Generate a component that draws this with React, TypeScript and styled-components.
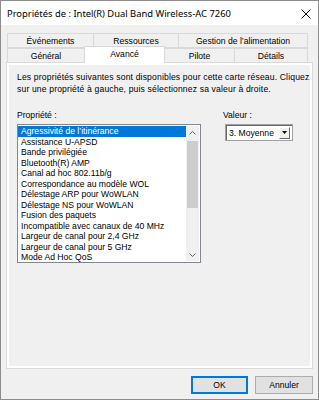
import React, { useState } from "react";
import styled, { createGlobalStyle } from "styled-components";

const GlobalStyle = createGlobalStyle`
  html, body {
    margin: 0;
    padding: 0;
    background: #ffffff;
  }
  * {
    box-sizing: border-box;
  }
`;

const properties = [
  "Agressivité de l’itinérance",
  "Assistance U-APSD",
  "Bande privilégiée",
  "Bluetooth(R) AMP",
  "Canal ad hoc 802.11b/g",
  "Correspondance au modèle WOL",
  "Délestage ARP pour WoWLAN",
  "Délestage NS pour WoWLAN",
  "Fusion des paquets",
  "Incompatible avec canaux de 40 MHz",
  "Largeur de canal pour 2,4 GHz",
  "Largeur de canal pour 5 GHz",
  "Mode Ad Hoc QoS",
];

const backTabs = [
  { label: "Événements", width: 87 },
  { label: "Ressources", width: 86 },
  { label: "Gestion de l’alimentation", width: 130 },
];

const frontTabs = [
  { label: "Général", width: 78 },
  { label: "Avancé", width: 81 },
  { label: "Pilote", width: 71 },
  { label: "Détails", width: 74 },
];

export default function App() {
  const [tab, setTab] = useState("Avancé");
  const [selected, setSelected] = useState(0);

  return (
    <>
      <GlobalStyle />
      <Window>
        <TitleBar>
          <Title>Propriétés de : Intel(R) Dual Band Wireless-AC 7260</Title>
          <CloseButton>
            <svg width="10" height="10" viewBox="0 0 10 10">
              <path d="M0.5 0.5 L9.5 9.5 M9.5 0.5 L0.5 9.5" stroke="#111" strokeWidth="1" />
            </svg>
          </CloseButton>
        </TitleBar>
        <Body>
          <TabRow>
            {backTabs.map((t) => (
              <Tab key={t.label} $width={t.width} onClick={() => setTab(t.label)}>
                {t.label}
              </Tab>
            ))}
          </TabRow>
          <TabRow>
            {frontTabs.map((t) => (
              <Tab
                key={t.label}
                $width={t.width}
                $active={tab === t.label}
                onClick={() => setTab(t.label)}
              >
                {t.label}
              </Tab>
            ))}
          </TabRow>
          <Panel>
            <Description>
              Les propriétés suivantes sont disponibles pour cette carte réseau. Cliquez
              <br />
              sur une propriété à gauche, puis sélectionnez sa valeur à droite.
            </Description>
            <Columns>
              <LeftColumn>
                <Label>Propriété :</Label>
                <ListBox>
                  <Items>
                    {properties.map((p, i) => (
                      <Item key={p} $selected={selected === i} onClick={() => setSelected(i)}>
                        {p}
                      </Item>
                    ))}
                  </Items>
                  <ScrollBar>
                    <ScrollArrow>
                      <svg width="7" height="4" viewBox="0 0 7 4">
                        <path d="M0.5 3.5 L3.5 0.5 L6.5 3.5" stroke="#606060" fill="none" />
                      </svg>
                    </ScrollArrow>
                    <Track>
                      <Thumb />
                    </Track>
                    <ScrollArrow>
                      <svg width="7" height="4" viewBox="0 0 7 4">
                        <path d="M0.5 0.5 L3.5 3.5 L6.5 0.5" stroke="#606060" fill="none" />
                      </svg>
                    </ScrollArrow>
                  </ScrollBar>
                </ListBox>
              </LeftColumn>
              <RightColumn>
                <Label>Valeur :</Label>
                <Combo>
                  <ComboText>3. Moyenne</ComboText>
                  <ComboButton>
                    <svg width="5" height="3" viewBox="0 0 5 3">
                      <path d="M0 0 L5 0 L2.5 3 Z" fill="#000" />
                    </svg>
                  </ComboButton>
                </Combo>
              </RightColumn>
            </Columns>
          </Panel>
          <Footer>
            <Button $default>OK</Button>
            <Button>Annuler</Button>
          </Footer>
        </Body>
      </Window>
    </>
  );
}

const Window = styled.div`
  width: 319px;
  height: 400px;
  display: flex;
  flex-direction: column;
  border: 1px solid #8c8c8c;
  background: #f0f0f0;
  font-family: "Liberation Sans", Arial, sans-serif;
  color: #000;
`;

const TitleBar = styled.div`
  height: 24px;
  flex-shrink: 0;
  display: flex;
  align-items: center;
  justify-content: space-between;
  background: #ffffff;
  padding: 0 7px 0 6px;
`;

const Title = styled.div`
  font-family: "Noto Sans", "Open Sans", sans-serif;
  font-size: 9.4px;
  color: #000;
  white-space: nowrap;
`;

const CloseButton = styled.div`
  display: flex;
  align-items: center;
  padding-top: 1px;
`;

const Body = styled.div`
  flex: 1;
  display: flex;
  flex-direction: column;
  padding: 8px 5px 0 5px;
`;

const TabRow = styled.div`
  display: flex;
  padding-left: 1px;
  font-size: 8.6px;
`;

const Tab = styled.div<{ $width: number; $active?: boolean }>`
  width: ${(p) => p.$width}px;
  height: ${(p) => (p.$active ? "17px" : "15px")};
  margin-top: ${(p) => (p.$active ? "-2px" : "0")};
  margin-bottom: ${(p) => (p.$active ? "-1px" : "0")};
  display: flex;
  justify-content: center;
  align-items: ${(p) => (p.$active ? "flex-start" : "center")};
  padding-top: ${(p) => (p.$active ? "2px" : "0")};
  border: 1px solid #d9d9d9;
  border-bottom: ${(p) => (p.$active ? "none" : "1px solid #d9d9d9")};
  margin-left: -1px;
  background: ${(p) => (p.$active ? "#ffffff" : "#f0f0f0")};
  position: relative;
  z-index: ${(p) => (p.$active ? 2 : 1)};
  white-space: nowrap;
  cursor: default;
  &:first-child {
    margin-left: 0;
  }
`;

const Panel = styled.div`
  height: 307px;
  width: 307px;
  margin-top: -1px;
  border: 1px solid #d9d9d9;
  box-shadow: inset 0 0 0 2px #ffffff;
  background: #f0f0f0;
  padding: 8px 10px 0 10px;
  display: flex;
  flex-direction: column;
  font-size: 8.6px;
`;

const Description = styled.div`
  line-height: 12px;
  letter-spacing: 0.15px;
  white-space: nowrap;
`;

const Columns = styled.div`
  display: flex;
  margin-top: 15px;
  gap: 22px;
`;

const LeftColumn = styled.div`
  display: flex;
  flex-direction: column;
`;

const RightColumn = styled.div`
  display: flex;
  flex-direction: column;
`;

const Label = styled.div`
  line-height: 10px;
  height: 10px;
  margin-bottom: 4px;
`;

const ListBox = styled.div`
  width: 184px;
  height: 139px;
  display: flex;
  border: 1px solid #828790;
  background: #ffffff;
  padding: 1px 1px 1px 0;
`;

const Items = styled.div`
  flex: 1;
  display: flex;
  flex-direction: column;
`;

const Item = styled.div<{ $selected: boolean }>`
  height: 10.5px;
  line-height: 10.5px;
  padding-left: 3px;
  white-space: nowrap;
  background: ${(p) => (p.$selected ? "#0078d7" : "transparent")};
  color: ${(p) => (p.$selected ? "#ffffff" : "#000000")};
  cursor: default;
`;

const ScrollBar = styled.div`
  width: 13px;
  display: flex;
  flex-direction: column;
  background: #f0f0f0;
`;

const ScrollArrow = styled.div`
  height: 13px;
  display: flex;
  align-items: center;
  justify-content: center;
`;

const Track = styled.div`
  flex: 1;
  padding: 2px 1px 0 1px;
`;

const Thumb = styled.div`
  height: 67px;
  background: #cdcdcd;
`;

const Combo = styled.div`
  margin-left: 2px;
  width: 68px;
  height: 17px;
  display: flex;
  align-items: center;
  justify-content: space-between;
  background: #ffffff;
  border: 1px solid #a0a0a0;
  box-shadow: inset 1px 1px 0 #696969;
  padding: 0 2px 0 3px;
`;

const ComboText = styled.div`
  font-size: 8.6px;
  padding-top: 1px;
`;

const ComboButton = styled.div`
  width: 11px;
  height: 12px;
  display: flex;
  align-items: center;
  justify-content: center;
  background: #f0f0f0;
  border-top: 1px solid #ffffff;
  border-left: 1px solid #ffffff;
  border-right: 1px solid #696969;
  border-bottom: 1px solid #696969;
`;

const Footer = styled.div`
  display: flex;
  justify-content: flex-end;
  gap: 7px;
  margin-top: 7px;
  padding-right: 0;
`;

const Button = styled.button<{ $default?: boolean }>`
  width: ${(p) => (p.$default ? "57px" : "58px")};
  height: 18px;
  padding: 0;
  font-family: "Liberation Sans", Arial, sans-serif;
  font-size: 8.6px;
  color: #000;
  background: #e1e1e1;
  border: 1px solid ${(p) => (p.$default ? "#0078d7" : "#adadad")};
  box-shadow: ${(p) => (p.$default ? "inset 0 0 0 1px #0078d7" : "none")};
  cursor: default;
`;
